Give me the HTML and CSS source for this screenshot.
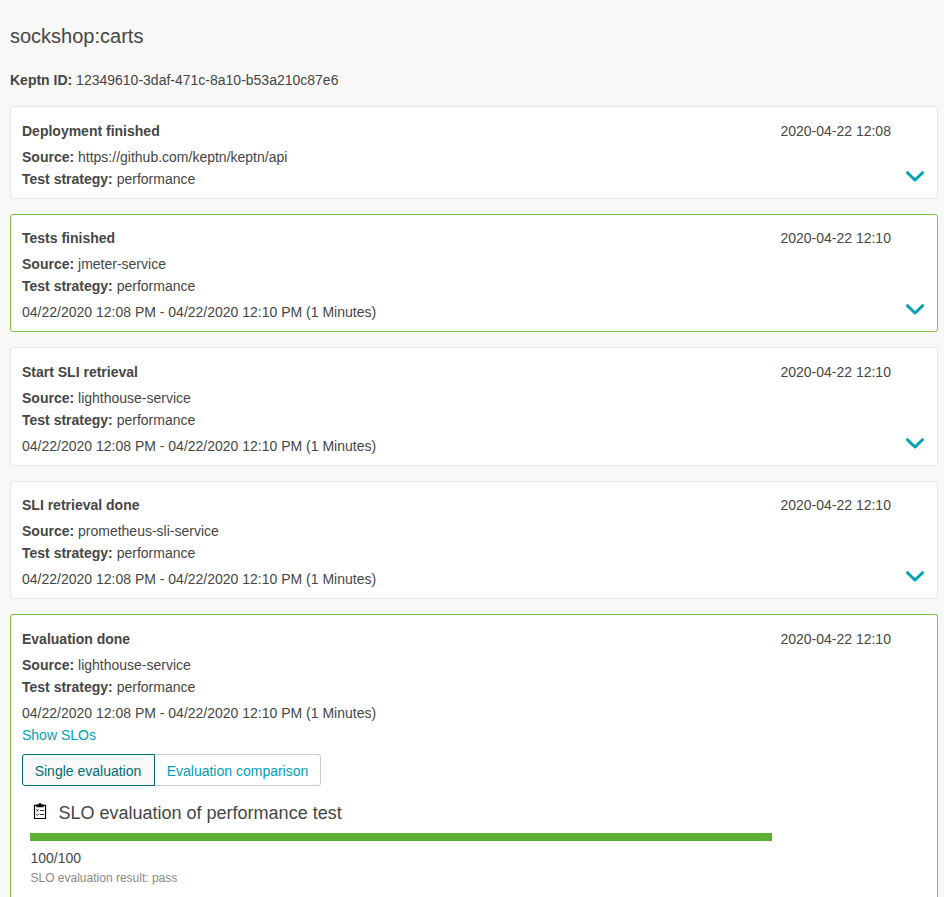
FILE: index.html
```html
<!DOCTYPE html>
<html lang="en">
<head>
<meta charset="utf-8">
<title>sockshop:carts</title>
<link rel="stylesheet" href="styles.css">
</head>
<body>
<main class="page">
  <h2 class="page-title">sockshop:carts</h2>
  <p class="keptn-id"><b>Keptn ID:</b> 12349610-3daf-471c-8a10-b53a210c87e6</p>

  <section class="card card-short">
    <div class="info">
      <h3>Deployment finished</h3>
      <p><b>Source:</b> https://github.com/keptn/keptn/api</p>
      <p><b>Test strategy:</b> performance</p>
    </div>
    <time class="stamp">2020-04-22 12:08</time>
    <svg class="chevron" viewBox="0 0 18 11"><path d="M1.500 1.700 9 9l7.500-7.300"/></svg>
  </section>

  <section class="card success">
    <div class="info">
      <h3>Tests finished</h3>
      <p><b>Source:</b> jmeter-service</p>
      <p><b>Test strategy:</b> performance</p>
      <p class="range">04/22/2020 12:08 PM - 04/22/2020 12:10 PM (1 Minutes)</p>
    </div>
    <time class="stamp">2020-04-22 12:10</time>
    <svg class="chevron" viewBox="0 0 18 11"><path d="M1.500 1.700 9 9l7.500-7.300"/></svg>
  </section>

  <section class="card">
    <div class="info">
      <h3>Start SLI retrieval</h3>
      <p><b>Source:</b> lighthouse-service</p>
      <p><b>Test strategy:</b> performance</p>
      <p class="range">04/22/2020 12:08 PM - 04/22/2020 12:10 PM (1 Minutes)</p>
    </div>
    <time class="stamp">2020-04-22 12:10</time>
    <svg class="chevron" viewBox="0 0 18 11"><path d="M1.500 1.700 9 9l7.500-7.300"/></svg>
  </section>

  <section class="card">
    <div class="info">
      <h3>SLI retrieval done</h3>
      <p><b>Source:</b> prometheus-sli-service</p>
      <p><b>Test strategy:</b> performance</p>
      <p class="range">04/22/2020 12:08 PM - 04/22/2020 12:10 PM (1 Minutes)</p>
    </div>
    <time class="stamp">2020-04-22 12:10</time>
    <svg class="chevron" viewBox="0 0 18 11"><path d="M1.500 1.700 9 9l7.500-7.300"/></svg>
  </section>

  <section class="card success card-open">
    <div class="info">
      <h3>Evaluation done</h3>
      <p><b>Source:</b> lighthouse-service</p>
      <p><b>Test strategy:</b> performance</p>
      <p class="range">04/22/2020 12:08 PM - 04/22/2020 12:10 PM (1 Minutes)</p>
      <p><a class="link">Show SLOs</a></p>
      <div class="toggle">
        <button class="option selected">Single evaluation</button>
        <button class="option">Evaluation comparison</button>
      </div>
      <div class="evaluation">
        <div class="eval-head">
          <svg class="clipboard" viewBox="0 0 14 17">
            <path class="frame" d="M1.500 2.300h11v13.200h-11z"/>
            <path class="clip" d="M3.500 1.500h2L6 .3h2l.5 1.200h2V4.300h-7z"/>
            <path class="mark" d="M3.400 6.300l2 2m0-2-2 2M6.800 7.500H11M3.300 11.300l1 1.100 1.700-1.900M6.800 11.500H11"/>
          </svg>
          <h4>SLO evaluation of performance test</h4>
        </div>
        <div class="bar"></div>
        <p class="score">100/100</p>
        <p class="result">SLO evaluation result: pass</p>
      </div>
    </div>
    <time class="stamp">2020-04-22 12:10</time>
  </section>
</main>
</body>
</html>
```
FILE: styles.css
```css
* { box-sizing: border-box; }
body {
  margin: 0;
  height: 100vh;
  overflow: hidden;
  background: #f8f8f8;
  color: #454646;
  font: 14px/22px "Liberation Sans", Arial, sans-serif;
}
h2, h3, h4, p { margin: 0; }
.page {
  display: flex;
  flex-direction: column;
  height: 100vh;
  padding: 20px 6px 0 10px;
}
.page-title { font-size: 20px; font-weight: 400; line-height: 32px; }
.keptn-id { margin: 17px 0 15.4px; }

.card {
  display: flex;
  flex: none;
  position: relative;
  height: 118.200px;
  margin-bottom: 15.300px;
  padding: 12.500px 46px 0 11px;
  background: #fff;
  border: 1px solid #e6e6e6;
  border-radius: 3px;
}
.card-short { height: 92.500px; margin-bottom: 15px; padding-top: 13px; }
.card.success { border-color: #7dc540; }
.card-open {
  flex: 1;
  height: auto;
  margin-bottom: 0;
  border-bottom: 0;
  border-radius: 3px 3px 0 0;
}
.info { flex: 1; }
.info h3 { margin-bottom: 4px; font-size: 14px; font-weight: 700; line-height: 22px; }
.range { margin-top: 4px; }
.stamp { width: 110.600px; white-space: nowrap; }
.chevron {
  position: absolute;
  right: 13px;
  bottom: 16px;
  width: 18px;
  height: 11px;
  overflow: visible;
  fill: none;
  stroke: #00a1b2;
  stroke-width: 3;
  stroke-linecap: round;
  stroke-linejoin: round;
}
.link { color: #00a1b2; }

.toggle { display: flex; margin-top: 8px; }
.option {
  height: 32px;
  width: 166px;
  padding: 2px 0 0;
  border: 1px solid #ccc;
  border-left: 0;
  border-radius: 0 3px 3px 0;
  background: #fff;
  color: #00a1b2;
  font: inherit;
  white-space: nowrap;
}
.option.selected {
  width: 133px;
  padding-right: 1px;
  border: 1px solid #006d75;
  border-radius: 3px 0 0 3px;
  background: #f8f8f8;
  color: #006d75;
}

.evaluation { width: 742px; margin: 15px 0 0 8px; }
.eval-head { display: flex; align-items: center; height: 24px; }
.eval-head h4 { margin-left: 11.500px; font-size: 18px; font-weight: 400; line-height: 24px; }
.clipboard { width: 14px; height: 17px; margin: -3px 0 0 3px; fill: none; stroke: #000; }
.clipboard .frame { stroke-width: 1.200; }
.clipboard .clip { fill: #000; stroke: none; }
.clipboard .mark { stroke-width: .8; }
.bar { height: 8px; margin-top: 8px; background: #5ead35; }
.score { margin-top: 6px; padding-left: .5px; }
.result { padding-left: .5px; color: #898989; font-size: 12px; line-height: 18px; }
```
